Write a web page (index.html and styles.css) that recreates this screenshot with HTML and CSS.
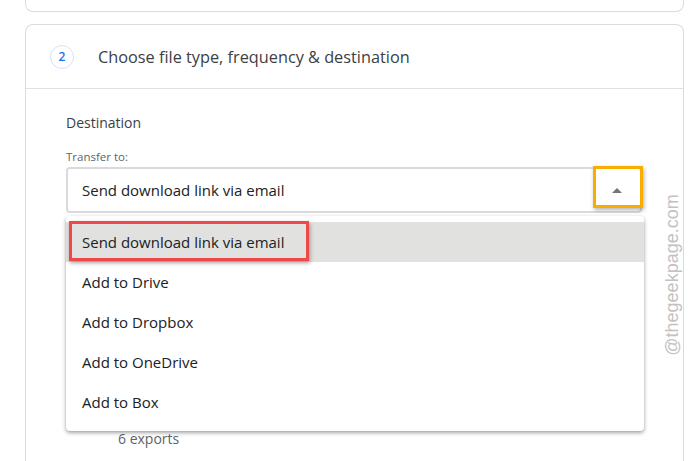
FILE: index.html
```html
<!DOCTYPE html>
<html>
<head>
<meta charset="utf-8">
<link rel="stylesheet" href="styles.css">
</head>
<body>
<div class="page">
  <div class="card-prev"></div>
  <div class="card">
    <div class="card-head">
      <span class="step">2</span>
      <span class="title">Choose file type, frequency &amp; destination</span>
    </div>
    <div class="card-body">
      <div class="label">Destination</div>
      <div class="sublabel">Transfer to:</div>
      <div class="select-wrap">
        <div class="select">
          <span class="select-value">Send download link via email</span>
          <span class="arrow"></span>
        </div>
        <div class="mark-orange"></div>
        <ul class="menu">
          <li class="item selected">Send download link via email</li>
          <li class="item">Add to Drive</li>
          <li class="item">Add to Dropbox</li>
          <li class="item">Add to OneDrive</li>
          <li class="item">Add to Box</li>
        </ul>
        <div class="mark-red"></div>
      </div>
      <div class="exports">6 exports</div>
    </div>
  </div>
</div>
<div class="watermark">@thegeekpage.com</div>
</body>
</html>
```
FILE: styles.css
```css
html, body {
  margin: 0;
  padding: 0;
  background: #ffffff;
  overflow: hidden;
  height: 461px;
}
body {
  font-family: "Open Sans", Roboto, "Liberation Sans", Arial, sans-serif;
  color: #3c4043;
  position: relative;
}
.page {
  padding-left: 25px;
  width: 659px;
}
.card-prev {
  height: 12px;
  box-sizing: border-box;
  border: 1px solid #dcdcdf;
  border-top: none;
  border-radius: 0 0 8px 8px;
}
.card {
  margin-top: 12px;
  border: 1px solid #dcdcdf;
  border-bottom: none;
  border-radius: 8px 8px 0 0;
  height: 460px;
  box-sizing: border-box;
}
.card-head {
  height: 63px;
  border-bottom: 1px solid #e0e0e0;
  display: flex;
  align-items: center;
  padding-left: 24px;
}
.step {
  width: 22px;
  height: 22px;
  border: 1px solid #d2e3fc;
  border-radius: 50%;
  display: flex;
  align-items: center;
  justify-content: center;
  font-size: 12px;
  font-weight: 600;
  color: #1a73e8;
}
.title {
  margin-left: 24px;
  font-size: 16.3px;
  color: #3c4043;
}
.card-body {
  padding: 26px 41px 0 40px;
}
.label {
  font-size: 14px;
  line-height: 16px;
  font-weight: 500;
  color: #3c4043;
}
.sublabel {
  margin-top: 19px;
  font-size: 11.5px;
  line-height: 14px;
  color: #5f6368;
}
.select-wrap {
  position: relative;
  margin-top: 3px;
}
.select {
  height: 46px;
  box-sizing: border-box;
  border: 2px solid #dadadd;
  border-radius: 4px;
  display: flex;
  align-items: center;
  padding-left: 14px;
  padding-right: 18px;
}
.select-value {
  flex: 1;
  font-size: 15px;
  color: #202124;
}
.arrow {
  width: 0;
  height: 0;
  border-left: 5px solid transparent;
  border-right: 5px solid transparent;
  border-bottom: 5px solid #757575;
}
.mark-orange {
  position: absolute;
  left: 527px;
  top: -1px;
  width: 44px;
  height: 36px;
  border: 3px solid #f9ad00;
  box-shadow: 1px 2px 4px rgba(0,0,0,0.3);
}
.menu {
  position: absolute;
  left: 0;
  right: -2px;
  top: 49px;
  margin: 0;
  padding: 6px 0 9px;
  list-style: none;
  background: #fff;
  border-radius: 4px;
  box-shadow: 0 2px 4px rgba(0,0,0,0.3), 0 1px 3px rgba(0,0,0,0.12);
  z-index: 2;
}
.item {
  height: 40px;
  display: flex;
  align-items: center;
  padding-left: 16px;
  font-size: 15px;
  color: #202124;
}
.item.selected {
  background: #e1e2e0;
}
.mark-red {
  position: absolute;
  left: 3px;
  top: 54px;
  width: 234px;
  height: 34px;
  border: 3px solid #f04848;
  box-shadow: 1px 2px 4px rgba(0,0,0,0.35);
  z-index: 3;
}
.exports {
  margin-top: 218px;
  margin-left: 52px;
  font-size: 14px;
  line-height: 16px;
  color: #5f6368;
}
.watermark {
  position: absolute;
  left: 672px;
  top: 275px;
  transform: translate(-50%, -50%) rotate(-90deg);
  font-family: "Liberation Sans", Arial, sans-serif;
  font-size: 18px;
  color: #c2c2c2;
  white-space: nowrap;
}
```
